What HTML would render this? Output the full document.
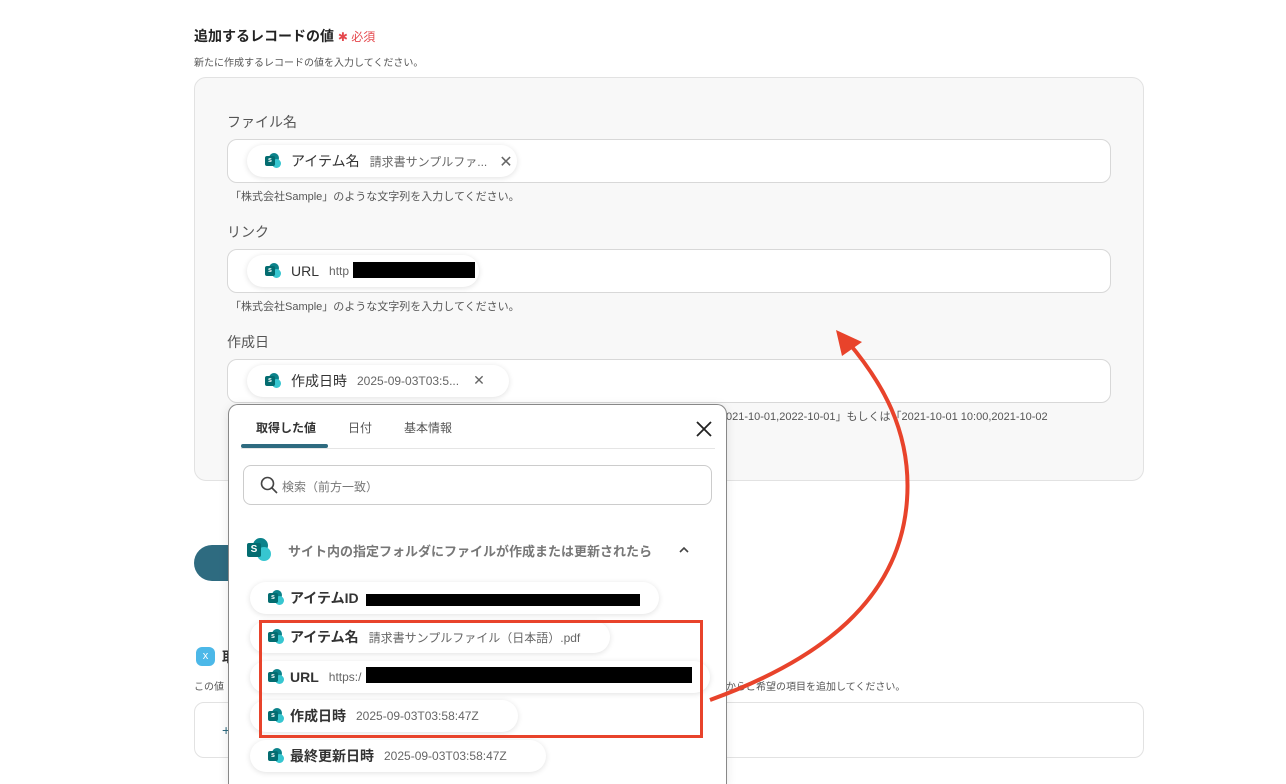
<!DOCTYPE html>
<html style="width:1286px;height:784px;overflow:hidden"><head><meta charset="utf-8"><style>
*{box-sizing:border-box;margin:0;padding:0}
body{width:1286px;height:784px;overflow:hidden;background:#fff;font-family:"Liberation Sans","Noto Sans CJK JP",sans-serif;color:#333;position:relative}
.a{position:absolute;white-space:nowrap}
.inp{position:absolute;left:227px;width:884px;height:44px;background:#fff;border:1px solid #d8d8d8;border-radius:10px}
.pill{position:absolute;height:32px;background:#fff;border-radius:16px;box-shadow:0 1px 6px rgba(0,0,0,.12);display:flex;align-items:center;padding-left:18px;font-size:14px;white-space:nowrap}
.pill .v{font-size:12px;color:#666;margin-left:10px}
.ic{width:16px;height:16px;position:relative;display:inline-block;flex:none}
.ic i{position:absolute;border-radius:50%}
.ic b{position:absolute;left:0;top:3px;width:10px;height:10px;background:#036c70;color:#fff;font-size:7px;line-height:10px;text-align:center;border-radius:2px;font-style:normal}
.bx{position:absolute;background:#000}
.hint{font-size:11px;color:#555}
.x{font-weight:100;color:#666;font-family:"DejaVu Sans",sans-serif}
</style></head><body>
<div class="a" style="left:194px;top:26px;font-size:14px;font-weight:bold;color:#222">追加するレコードの値 <span style="color:#e5484d;font-weight:normal;font-size:12px">✱ 必須</span></div>
<div class="a" style="left:194px;top:54px;font-size:10px;color:#555">新たに作成するレコードの値を入力してください。</div>
<div class="a" style="left:194px;top:77px;width:950px;height:404px;background:#f8f8f8;border:1px solid #e2e2e2;border-radius:12px"></div>

<div class="a" style="left:227px;top:112px;font-size:14px;color:#555">ファイル名</div>
<div class="inp" style="top:139px"></div>
<div class="pill" style="left:247px;top:145px;width:270px"><span class="ic"><i style="left:4px;top:0;width:10px;height:10px;background:#0b828a"></i><i style="left:7px;top:6px;width:9px;height:9px;background:#37c6d0"></i><b>s</b></span><span style="margin-left:10px">アイテム名</span><span class="v">請求書サンプルファ...</span><span class="x" style="margin-left:12px;font-size:16px">✕</span></div>
<div class="a hint" style="left:230px;top:188px">「株式会社Sample」のような文字列を入力してください。</div>

<div class="a" style="left:227px;top:222px;font-size:14px;color:#555">リンク</div>
<div class="inp" style="top:249px"></div>
<div class="pill" style="left:247px;top:255px;width:232px"><span class="ic"><i style="left:4px;top:0;width:10px;height:10px;background:#0b828a"></i><i style="left:7px;top:6px;width:9px;height:9px;background:#37c6d0"></i><b>s</b></span><span style="margin-left:10px">URL</span><span class="v">http</span></div>
<div class="bx" style="left:353px;top:262px;width:122px;height:16px"></div>
<div class="a hint" style="left:230px;top:298px">「株式会社Sample」のような文字列を入力してください。</div>

<div class="a" style="left:227px;top:332px;font-size:14px;color:#555">作成日</div>
<div class="inp" style="top:359px"></div>
<div class="pill" style="left:247px;top:365px;width:262px"><span class="ic"><i style="left:4px;top:0;width:10px;height:10px;background:#0b828a"></i><i style="left:7px;top:6px;width:9px;height:9px;background:#37c6d0"></i><b>s</b></span><span style="margin-left:10px">作成日時</span><span class="v">2025-09-03T03:5...</span><span class="x" style="margin-left:14px;font-size:14px">✕</span></div>
<div class="a hint" style="left:726px;top:408px">021-10-01,2022-10-01」もしくは「2021-10-01 10:00,2021-10-02</div>

<div class="a" style="left:194px;top:545px;width:80px;height:36px;background:#2e6b80;border-radius:18px"></div>
<div class="a" style="left:196px;top:647px;width:19px;height:19px;background:#4cb8e8;border-radius:6px;color:#fff;font-size:11px;text-align:center;line-height:19px">x</div>
<div class="a" style="left:222px;top:647px;font-size:14px;font-weight:bold">取</div>
<div class="a" style="left:194px;top:678px;font-size:10px;color:#555">この値</div>
<div class="a" style="left:726px;top:678px;font-size:10px;color:#555">からご希望の項目を追加してください。</div>
<div class="a" style="left:194px;top:702px;width:950px;height:56px;background:#fff;border:1px solid #e2e2e2;border-radius:10px"></div>
<div class="a" style="left:222px;top:722px;font-size:14px;color:#2e6b80">+</div>

<div class="a" style="left:228px;top:404px;width:499px;height:380px;background:#fff;border:1px solid #888;border-bottom:none;border-radius:10px 10px 0 0;box-shadow:0 2px 10px rgba(0,0,0,.1)">
  <div class="a" style="left:27px;top:14px;font-size:12px;font-weight:bold;color:#333">取得した値</div>
  <div class="a" style="left:119px;top:14px;font-size:12px;color:#555">日付</div>
  <div class="a" style="left:175px;top:14px;font-size:12px;color:#555">基本情報</div>
  <svg class="a" style="left:467px;top:16px" width="16" height="16" viewBox="0 0 16 16"><path d="M1 1L15 15M15 1L1 15" stroke="#222" stroke-width="1.8"/></svg>
  <div class="a" style="left:12px;top:39px;width:87px;height:4px;background:#2e6b80;border-radius:2px"></div>
  <div class="a" style="left:12px;top:43px;width:474px;height:1px;background:#e5e5e5"></div>
  <div class="a" style="left:14px;top:60px;width:469px;height:40px;border:1px solid #ccc;border-radius:8px">
    <svg class="a" style="left:16px;top:10px" width="18" height="18" viewBox="0 0 18 18"><circle cx="7.5" cy="7.5" r="6" fill="none" stroke="#444" stroke-width="1.6"/><path d="M12 12l5 5" stroke="#444" stroke-width="1.6"/></svg>
    <div class="a" style="left:38px;top:12px;font-size:12px;color:#777">検索（前方一致）</div>
  </div>
  <span class="ic a" style="left:18px;top:133px;width:24px;height:24px"><i style="left:6px;top:0;width:15px;height:15px;background:#0b828a"></i><i style="left:10px;top:9px;width:14px;height:14px;background:#37c6d0"></i><b style="width:14px;height:14px;top:5px;font-size:10px;line-height:14px">S</b></span>
  <div class="a" style="left:59px;top:136px;font-size:13px;font-weight:bold;color:#777">サイト内の指定フォルダにファイルが作成または更新されたら</div>
  <svg class="a" style="left:449px;top:141px" width="12" height="8" viewBox="0 0 12 8"><path d="M2 6L6 2L10 6" fill="none" stroke="#444" stroke-width="1.6"/></svg>
</div>
<div class="pill" style="left:250px;top:582px;width:409px"><span class="ic"><i style="left:4px;top:0;width:10px;height:10px;background:#0b828a"></i><i style="left:7px;top:6px;width:9px;height:9px;background:#37c6d0"></i><b>s</b></span><span style="margin-left:6px;font-weight:bold">アイテムID</span></div>
<div class="bx" style="left:366px;top:594px;width:274px;height:12px"></div>
<div class="pill" style="left:250px;top:621px;width:360px"><span class="ic"><i style="left:4px;top:0;width:10px;height:10px;background:#0b828a"></i><i style="left:7px;top:6px;width:9px;height:9px;background:#37c6d0"></i><b>s</b></span><span style="margin-left:6px;font-weight:bold">アイテム名</span><span class="v">請求書サンプルファイル（日本語）.pdf</span></div>
<div class="pill" style="left:250px;top:661px;width:460px"><span class="ic"><i style="left:4px;top:0;width:10px;height:10px;background:#0b828a"></i><i style="left:7px;top:6px;width:9px;height:9px;background:#37c6d0"></i><b>s</b></span><span style="margin-left:6px;font-weight:bold">URL</span><span class="v">https:/</span></div>
<div class="bx" style="left:366px;top:667px;width:326px;height:16px"></div>
<div class="pill" style="left:250px;top:700px;width:268px"><span class="ic"><i style="left:4px;top:0;width:10px;height:10px;background:#0b828a"></i><i style="left:7px;top:6px;width:9px;height:9px;background:#37c6d0"></i><b>s</b></span><span style="margin-left:6px;font-weight:bold">作成日時</span><span class="v">2025-09-03T03:58:47Z</span></div>
<div class="pill" style="left:250px;top:740px;width:296px"><span class="ic"><i style="left:4px;top:0;width:10px;height:10px;background:#0b828a"></i><i style="left:7px;top:6px;width:9px;height:9px;background:#37c6d0"></i><b>s</b></span><span style="margin-left:6px;font-weight:bold">最終更新日時</span><span class="v">2025-09-03T03:58:47Z</span></div>
<div class="a" style="left:259px;top:620px;width:444px;height:118px;border:3px solid #e8432b"></div>
<svg class="a" style="left:0;top:0" width="1286" height="784"><path d="M710 700 C820 660 900 600 907 500 C912 430 880 380 848 342" fill="none" stroke="#e8432b" stroke-width="4"/><path d="M836 330 L862 342 L842 356 Z" fill="#e8432b"/></svg>
</body></html>
